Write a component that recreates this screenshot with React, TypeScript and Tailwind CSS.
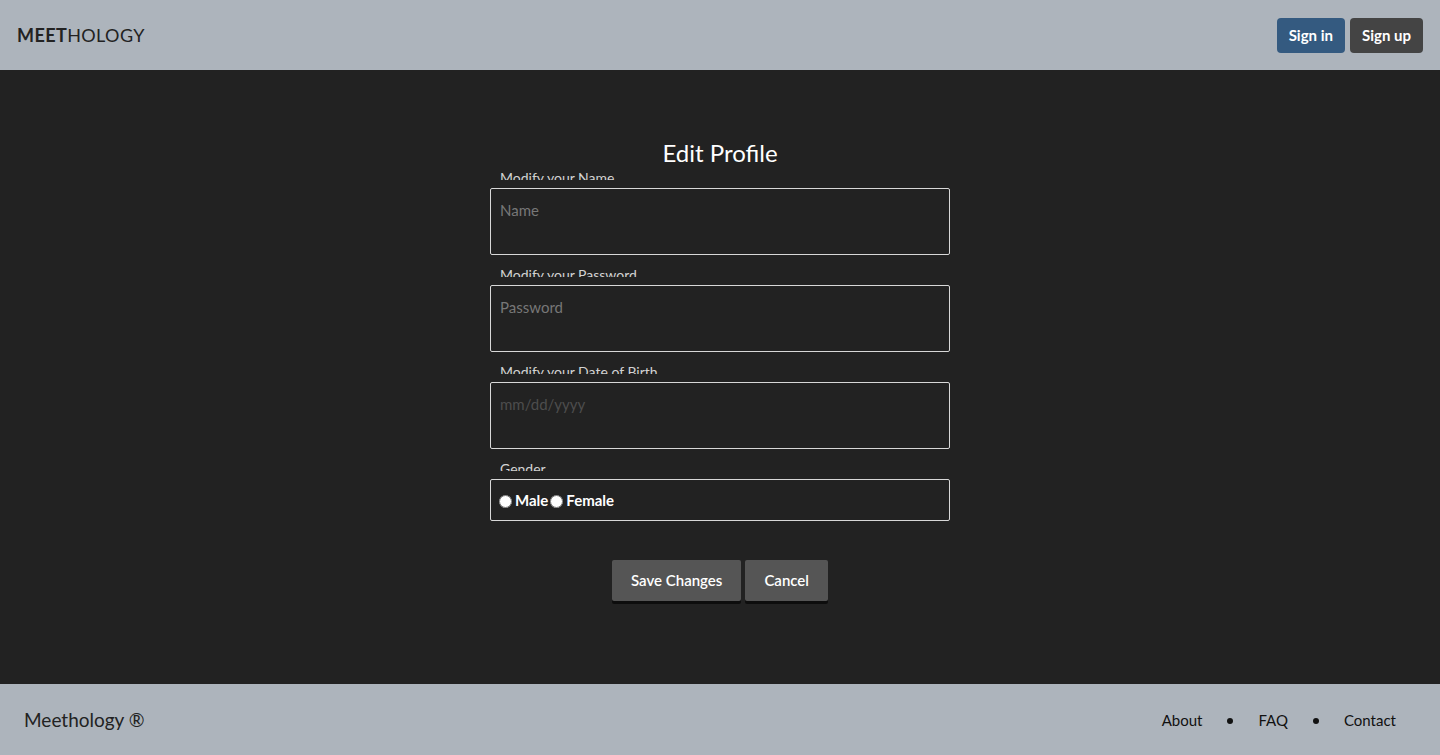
import React from 'react'

const fields = [
  { label: 'Modify your Name', placeholder: 'Name', type: 'text', muted: false },
  { label: 'Modify your Password', placeholder: 'Password', type: 'password', muted: false },
  { label: 'Modify your Date of Birth', placeholder: 'mm/dd/yyyy', type: 'text', muted: true },
]

function FieldLabel({ text }: { text: string }) {
  return (
    <div className="h-[12px] overflow-hidden pl-[10px] text-[14px] leading-[20px] text-[#d2d2d2]">{text}</div>
  )
}

export default function App() {
  return (
    <div className="flex h-screen flex-col bg-[#222222] font-['Lato','Noto_Sans',sans-serif]">
      {/* Top bar */}
      <header className="flex h-[70px] shrink-0 items-center justify-between bg-[#adb4bc] pl-[17px] pr-[17px]">
        <div className="text-[18px] tracking-[0.4px] text-[#222]">
          <span className="font-bold">MEET</span>
          <span>HOLOGY</span>
        </div>
        <div className="flex gap-[5px]">
          <button className="h-[35px] rounded-[4px] bg-[#345a80] px-[12px] text-[15px] font-bold text-white">Sign in</button>
          <button className="h-[35px] rounded-[4px] bg-[#444444] px-[12px] text-[15px] font-bold text-white">Sign up</button>
        </div>
      </header>

      {/* Form */}
      <main className="flex flex-1 flex-col items-center pt-[68px]">
        <h1 className="text-[24px] leading-[30px] text-white">Edit Profile</h1>
        <form className="flex w-[460px] flex-col">
          {fields.map((f, i) => (
            <div key={f.label} className={i === 0 ? 'mt-0' : 'mt-[10px]'}>
              <FieldLabel text={f.label} />
              <input
                type={f.type}
                placeholder={f.placeholder}
                className={
                  f.muted
                    ? 'mt-[8px] h-[67px] w-full rounded-[2px] border border-[#d8d8d8] bg-transparent px-[9px] pt-[9px] pb-[32px] text-[15px] text-white placeholder:text-[#4d4d4d] outline-none'
                    : 'mt-[8px] h-[67px] w-full rounded-[2px] border border-[#d8d8d8] bg-transparent px-[9px] pt-[9px] pb-[32px] text-[15px] text-white placeholder:text-[#777] outline-none'
                }
              />
            </div>
          ))}
          <div className="mt-[10px]">
            <FieldLabel text="Gender" />
            <div className="mt-[8px] flex h-[42px] items-center rounded-[2px] border border-[#d8d8d8] pl-[8px] text-[15px] font-bold text-white">
              <label className="flex items-center">
                <input type="radio" name="gender" className="m-0 mt-[2px] h-[13px] w-[13px]" />
                <span className="ml-[3px]">Male</span>
              </label>
              <label className="ml-[2px] flex items-center">
                <input type="radio" name="gender" className="m-0 mt-[2px] h-[13px] w-[13px]" />
                <span className="ml-[3px]">Female</span>
              </label>
            </div>
          </div>
          <div className="mt-[39px] flex justify-center gap-[4px]">
            <button type="button" className="h-[41px] rounded-[2px] bg-[#555555] px-[19px] text-[15px] font-semibold text-white shadow-[0_3px_0_#0d0d0d]">Save Changes</button>
            <button type="button" className="h-[41px] rounded-[2px] bg-[#555555] px-[19px] text-[15px] font-semibold text-white shadow-[0_3px_0_#0d0d0d]">Cancel</button>
          </div>
        </form>
      </main>

      {/* Footer */}
      <footer className="flex h-[71px] shrink-0 items-center justify-between bg-[#adb4bc] pt-[2px] pl-[24px] pr-[44px]">
        <div className="text-[19px] text-[#222]">Meethology ®</div>
        <nav className="flex items-center gap-[25px] text-[15px] text-[#111]">
          <a href="#">About</a>
          <span className="h-[6px] w-[6px] rounded-full bg-[#111]" />
          <a href="#">FAQ</a>
          <span className="h-[6px] w-[6px] rounded-full bg-[#111]" />
          <a href="#">Contact</a>
        </nav>
      </footer>
    </div>
  )
}
